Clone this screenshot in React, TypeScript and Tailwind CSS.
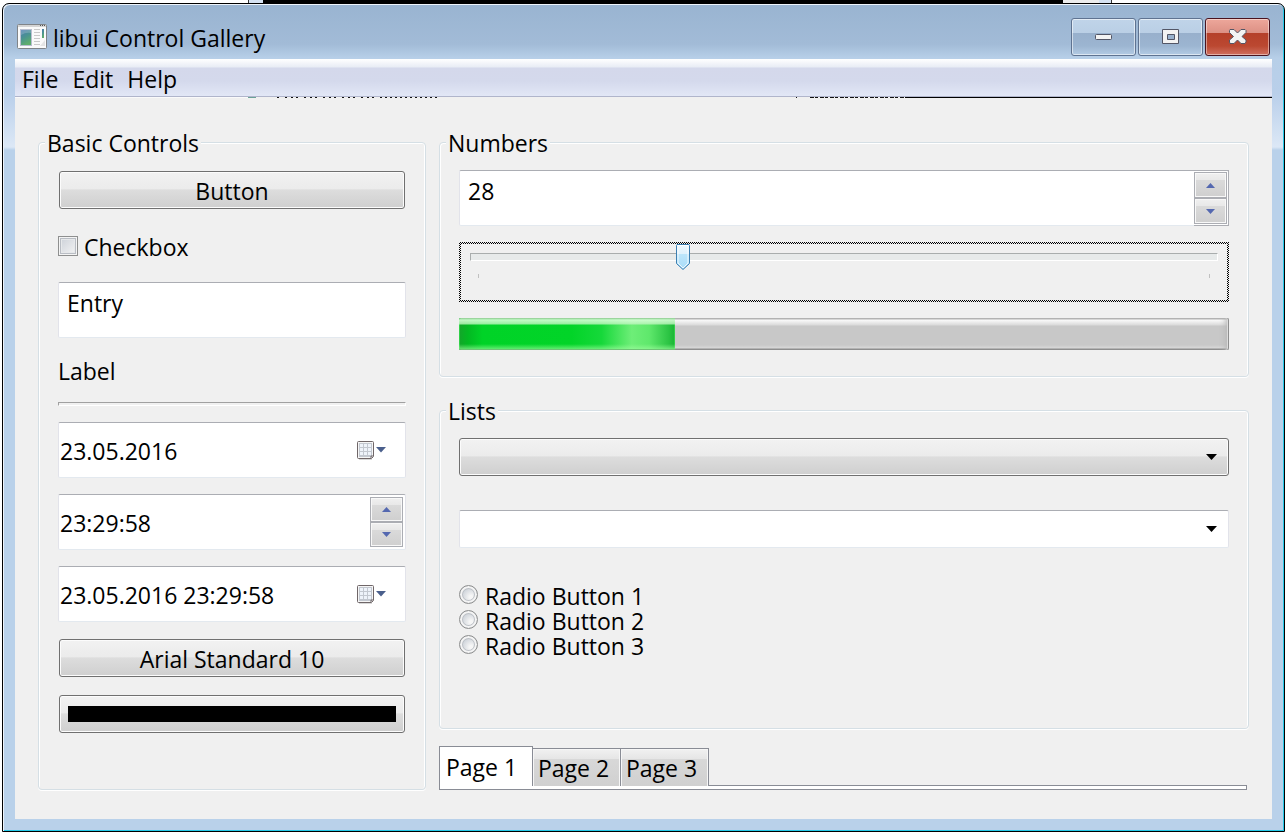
import React, { useState } from 'react';

const buttonFace =
  'border border-[#707070] rounded-[3px] shadow-[inset_0_0_0_1px_#fcfcfc] bg-[linear-gradient(#f2f2f2_0%,#ebebeb_48%,#dddddd_49%,#cfcfcf_100%)]';
const entryFace =
  'border border-t-[#abadb3] border-x-[#e2e3ea] border-b-[#e3e9ef] rounded-[2px] bg-white';

const Group: React.FC<{ title: string; className?: string; children: React.ReactNode }> = ({ title, className, children }) => (
  <fieldset
    className={`min-w-0 border border-[#d5dfe5] rounded-[4px] px-[19px] shadow-[inset_1px_1px_0_#fff,inset_-1px_0_0_#fff,0_1px_0_#fff] ${className ?? ''}`}
  >
    <legend className="-ml-[13px] bg-[#f0f0f0] px-[2px] pt-[3px] pb-px leading-6">{title}</legend>
    <div className="pt-[14px]">{children}</div>
  </fieldset>
);

const AppIcon = () => (
  <svg width="30" height="26" viewBox="0 0 30 26" className="shrink-0" aria-hidden="true">
    <defs>
      <linearGradient id="pane" x1="0" y1="0" x2="0.4" y2="1">
        <stop offset="0" stopColor="#4a78b4" />
        <stop offset="0.55" stopColor="#4b948f" />
        <stop offset="1" stopColor="#5fae6c" />
      </linearGradient>
    </defs>
    <rect x="0.5" y="0.5" width="29" height="24" rx="1" fill="#fafafa" stroke="#808488" />
    <rect x="1" y="1" width="28" height="2" fill="#d4d4d4" />
    <path d="M23 1.5h1M25 1.5h1M27 1.5h1" stroke="#555" />
    <rect x="3.5" y="5.5" width="11" height="16" fill="url(#pane)" stroke="#b9bfd0" />
    <path d="M4 11q5 -3 10 -2V6H4z" fill="#fff" opacity="0.2" />
    <path d="M17 5.5h6M17 8.5h6M17 11.5h6M17 14.5h6M17 17.5h6M17 20.5h6" stroke="#c9c9c9" />
    <rect x="25" y="5" width="2" height="9" fill="url(#pane)" />
    <path d="M28 16v6h-5z" fill="#e4e4e4" />
  </svg>
);

const captionButton =
  'flex h-[38px] w-[65px] items-center justify-center rounded-[3px] border border-[#5f7391] shadow-[inset_0_0_0_1px_rgba(255,255,255,0.55)] bg-[linear-gradient(#c0d4e9_0%,#bacfe5_39%,#98b0cc_40%,#9cb5d1_75%,#b3cbe4_100%)]';

const TitleBar = () => (
  <header className="flex h-[55px] items-center px-[14px] pt-[10px]">
    <AppIcon />
    <h1 className="min-w-0 flex-1 truncate pl-[6px] pt-[2px]">libui Control Gallery</h1>
    <div className="flex gap-[2px]">
      <button type="button" aria-label="Minimize" className={captionButton}>
        <svg width="18" height="8" viewBox="0 0 18 8">
          <rect x="0.5" y="1.5" width="16" height="5" rx="1" fill="#f3f3f3" stroke="#535666" />
        </svg>
      </button>
      <button type="button" aria-label="Maximize" className={captionButton}>
        <svg width="18" height="16" viewBox="0 0 18 16">
          <path d="M0.5 0.5h16v14h-16zM5.5 5.5v5h7v-5z" fill="#f3f3f3" fillRule="evenodd" stroke="#535666" strokeLinejoin="round" />
        </svg>
      </button>
      <button
        type="button"
        aria-label="Close"
        className="flex h-[38px] w-[65px] items-center justify-center rounded-[3px] border border-[#4a1420] bg-[linear-gradient(#eda79b_0%,#dc9084_39%,#b5402a_40%,#bb4831_75%,#d07060_100%)] shadow-[inset_0_0_0_1px_rgba(255,255,255,0.45)]"
      >
        <svg width="18" height="16" viewBox="0 0 18 16">
          <path
            d="M1 0.5h4L8.500 4 12 0.500h4l1 1v2L13 7.500l4 3.500v2l-1 1.500h-4L8.500 11 5 14.500h-4l-0.500 -1.500v-2l4 -3.500L0.500 3.500v-2z"
            fill="#f3f3f3"
            stroke="#535666"
            strokeLinejoin="round"
          />
        </svg>
      </button>
    </div>
  </header>
);

const MenuBar = () => (
  <nav className="flex h-[38px] gap-[14px] border-b border-[#b0b5cb] bg-[linear-gradient(#ffffff_0px,#e8ecf5_8px,#d4d8eb_9px,#d4d9ec_22px,#e2e7f6_37px)] pl-[7px] pt-[2px]">
    {['File', 'Edit', 'Help'].map((item) => (
      <button key={item} type="button" className="leading-9">
        {item}
      </button>
    ))}
  </nav>
);

// Leftovers of the windows behind that show through under the menu
const BackdropRow = () => (
  <div className="flex h-px" aria-hidden="true">
    <svg width="781" height="1" className="shrink-0">
      <rect width="240" height="1" fill="#fafafa" />
      <rect x="233" width="8" height="1" fill="#6aa197" />
      <path d="M262 0.5h108" stroke="#111" strokeDasharray="2 6 2 4 2 3" />
      <path d="M370 0.5h52" stroke="#111" strokeDasharray="2 3" />
    </svg>
    <svg width="109" height="1" className="shrink-0">
      <path d="M0 0.500h1M14 0.500h95" stroke="#111" strokeDasharray="4 1 3 2" />
    </svg>
    <div className="flex-1 bg-black" />
  </div>
);

const Spinner: React.FC<{ label: string; onStep?: (by: number) => void }> = ({ label, onStep }) => {
  const face =
    'flex flex-1 items-center justify-center border border-[#abadb3] bg-[linear-gradient(#f0f0f0_0%,#e8e8e8_30%,#dadada_31%,#cfcfcf_100%)] shadow-[inset_0_0_0_1px_#f8f8f8]';
  return (
    <div className="flex w-[33px] shrink-0 flex-col">
      <button type="button" aria-label={`${label} up`} onClick={() => onStep?.(1)} className={face}>
        <svg width="9" height="5" viewBox="0 0 9 5">
          <path d="M0 5L4.500 0L9 5z" fill="#5468b0" />
        </svg>
      </button>
      <button type="button" aria-label={`${label} down`} onClick={() => onStep?.(-1)} className={face}>
        <svg width="9" height="5" viewBox="0 0 9 5">
          <path d="M0 0L4.500 5L9 0z" fill="#5468b0" />
        </svg>
      </button>
    </div>
  );
};

const DateField: React.FC<{ label: string; value: string }> = ({ label, value }) => (
  <div className={`flex h-14 items-center ${entryFace}`}>
    <input type="text" aria-label={label} defaultValue={value} className="h-full min-w-0 flex-1 bg-transparent pl-px pt-px outline-none" />
    <button type="button" aria-label={`${label} calendar`} className="mr-[19px] flex shrink-0 items-center gap-[2px]">
      <svg width="17" height="19" viewBox="0 0 17 19">
        <path d="M2 18.500h13" stroke="#d8d8d8" />
        <path d="M0.500 1.500a1 1 0 0 1 1 -1h14a1 1 0 0 1 1 1v14l-2 2h-13a1 1 0 0 1 -1 -1z" fill="#f6f6f6" stroke="#6f6668" />
        <rect x="2" y="2" width="13" height="14" fill="#c3c8d0" />
        <path
          d="M3 3h3v3h-3zM7 3h3v3h-3zM11 3h3v3h-3zM3 7h3v3h-3zM7 7h3v3h-3zM11 7h3v3h-3zM3 11h3v3h-3zM7 11h3v3h-3zM11 11h3v3h-3z"
          fill="#eef3fa"
        />
        <path d="M14 17v-2h2" fill="none" stroke="#6f6668" />
      </svg>
      <svg width="10" height="6" viewBox="0 0 10 6">
        <path d="M0 0h10L5 5.500z" fill="#4a5f8c" />
      </svg>
    </button>
  </div>
);

const ComboArrow = () => (
  <svg width="11" height="6" viewBox="0 0 11 6" aria-hidden="true">
    <path d="M0 0h11L5.500 6z" fill="#000" />
  </svg>
);

const BasicControls = () => (
  <Group title="Basic Controls" className="w-[388px] shrink-0">
    <div className="flex flex-col gap-4">
      <div className="flex h-10 p-px">
        <button type="button" className={`flex-1 pt-px ${buttonFace}`}>Button</button>
      </div>
      <label className="flex h-10 items-center gap-[6px]">
        <input
          type="checkbox"
          className="size-5 shrink-0 appearance-none border border-[#8e8f8f] bg-[linear-gradient(135deg,#c9ced6,#f6f6f6)] shadow-[inset_0_0_0_1px_#f4f4f4,inset_0_0_0_2px_#b9bdc4,inset_0_0_0_3px_#e6e8ea] checked:bg-[#4a5f97]"
        />
        <span className="pt-px">Checkbox</span>
      </label>
      <input type="text" aria-label="Entry" defaultValue="Entry" className={`h-14 w-full pb-[14px] pl-2 outline-none ${entryFace}`} />
      <p className="h-8 pt-px leading-8">Label</p>
      <hr className="h-1 border border-[#a0a0a0] border-r-white border-b-white" />
      <DateField label="Date" value="23.05.2016" />
      <div className={`flex h-14 py-[2px] pr-[2px] ${entryFace}`}>
        <input type="text" aria-label="Time" defaultValue="23:29:58" className="min-w-0 flex-1 bg-transparent pl-px pt-px outline-none" />
        <Spinner label="Time" />
      </div>
      <DateField label="Date and time" value="23.05.2016 23:29:58" />
      <div className="flex h-10 p-px">
        <button type="button" className={`flex-1 pt-px ${buttonFace}`}>Arial Standard 10</button>
      </div>
      <div className="flex h-10 p-px">
        <button type="button" aria-label="Color" className={`flex flex-1 items-center px-2 ${buttonFace}`}>
          <span className="h-4 flex-1 bg-black" />
        </button>
      </div>
    </div>
  </Group>
);

const Numbers = () => {
  const [value, setValue] = useState(28);
  const change = (next: number) => setValue(Math.min(100, Math.max(0, next || 0)));

  return (
    <Group title="Numbers" className="pb-[26px]">
      <div className="flex flex-col gap-4">
        <div className={`flex h-14 ${entryFace}`}>
          <input
            type="text"
            inputMode="numeric"
            aria-label="Number"
            value={value}
            onChange={(e) => change(Number(e.target.value))}
            className="min-w-0 flex-1 bg-transparent pb-[14px] pl-2 outline-none"
          />
          <div className="-my-px -mr-px flex border border-l-0 border-[#abadb3] py-px pr-px">
            <Spinner label="Number" onStep={(by) => change(value + by)} />
          </div>
        </div>

        {/* focus ring is a one pixel checkerboard */}
        <div className="relative h-[60px] bg-[repeating-conic-gradient(#000_0_25%,#f0f0f0_0_50%)] bg-[length:2px_2px] p-[2px]">
          <div className="h-full bg-[#f0f0f0] px-[9px] pt-[9px]">
            <div className="h-2 border border-t-[#a9adad] border-l-[#a9adad] border-r-white border-b-white bg-[#e7eaea]" />
            <div className="flex justify-between px-2 pt-[13px]">
              <span className="h-1 w-px bg-[#c0c0c0]" />
              <span className="h-1 w-px bg-[#c0c0c0]" />
            </div>
          </div>
          <div className="pointer-events-none absolute inset-x-[19px] top-[2px]">
            <svg width="15" height="27" viewBox="0 0 15 27" className="absolute -translate-x-1/2" style={{ left: `${value}%` }} aria-hidden="true">
              <defs>
                <linearGradient id="thumb" x1="0" y1="0" x2="0" y2="1">
                  <stop offset="0" stopColor="#eef8fe" />
                  <stop offset="0.36" stopColor="#e0f2fc" />
                  <stop offset="0.37" stopColor="#bde6fb" />
                  <stop offset="1" stopColor="#a9dcf8" />
                </linearGradient>
              </defs>
              <path d="M1.500 0.500h12l0.500 1v18l-6.500 6l-6.500 -6v-18z" fill="url(#thumb)" stroke="#3c7fb1" />
              <path d="M2.500 1.500h10v17.500l-5 5l-5 -5z" fill="none" stroke="#fff" opacity="0.8" />
            </svg>
          </div>
          <input
            type="range"
            aria-label="Slider"
            min={0}
            max={100}
            value={value}
            onChange={(e) => change(Number(e.target.value))}
            className="absolute inset-0 h-full w-full opacity-0"
          />
        </div>

        <div
          role="progressbar"
          aria-label="Progress"
          aria-valuenow={value}
          aria-valuemin={0}
          aria-valuemax={100}
          className="h-8 overflow-hidden rounded-[2px] bg-[linear-gradient(#b2b2b2_0px,#b2b2b2_1px,#fafafa_2px,#dadada_7px,#c8c8c8_8px,#c8c8c8_27px,#d8d8d8_30px,#8e8e8e_31px,#8e8e8e_32px)] shadow-[inset_-1px_0_0_#8e8e8e,inset_-2px_0_0_#dcdcdc,inset_-9px_0_6px_-6px_#b4b4b4]"
        >
          <div
            className="h-full bg-[linear-gradient(90deg,#14a52a_0%,#03b822_4%,#00d327_11%,#02d428_52%,#16d83a_66%,#6eee78_80%,#5fe86c_88%,#2cc444_97%,#19b534_100%)] shadow-[inset_0_0_0_1px_#30cf48]"
            style={{ width: `${value}%` }}
          >
            <div className="h-full bg-[linear-gradient(rgba(150,200,150,0.9)_0px,rgba(215,255,215,0.9)_2px,rgba(190,245,190,0.8)_6px,rgba(255,255,255,0)_7px,rgba(255,255,255,0)_26px,rgba(160,255,160,0.6)_31px,#6a9a6c_32px)]" />
          </div>
        </div>
      </div>
    </Group>
  );
};

const Lists = () => (
  <Group title="Lists" className="flex-1">
    <div className="flex flex-col gap-[34px]">
      <div className="relative">
        <select aria-label="Combobox" className={`block h-[38px] w-full appearance-none px-2 outline-none ${buttonFace}`}>
          <option value=""></option>
          <option>Item 1</option>
          <option>Item 2</option>
        </select>
        <span className="pointer-events-none absolute inset-y-0 right-3 flex items-center">
          <ComboArrow />
        </span>
      </div>
      <div className={`flex h-[38px] ${entryFace}`}>
        <input type="text" aria-label="Editable combobox" className="min-w-0 flex-1 bg-transparent px-2 outline-none" />
        <button type="button" aria-label="Show items" className="px-[11px]">
          <ComboArrow />
        </button>
      </div>
      <div className="flex flex-col">
        {['Radio Button 1', 'Radio Button 2', 'Radio Button 3'].map((item) => (
          <label key={item} className="flex h-[25px] items-center gap-[7px]">
            <input
              type="radio"
              name="radio"
              className="size-[19px] shrink-0 appearance-none rounded-full border border-[#8e8f8f] bg-[radial-gradient(circle_at_65%_65%,#f6f6f6_10%,#c6ccd4_70%)] shadow-[inset_0_0_0_2px_#f4f4f4,inset_0_0_0_3px_#bcc0c6] checked:bg-[#4a5f97]"
            />
            <span className="pt-[3px] leading-[22px]">{item}</span>
          </label>
        ))}
      </div>
    </div>
  </Group>
);

const Tabs = () => {
  const [active, setActive] = useState(0);
  return (
    <div className="mr-[2px] pt-[17px]">
      <div role="tablist" className="flex h-[40px] items-end">
        {['Page 1', 'Page 2', 'Page 3'].map((tab, i) => (
          <button
            key={tab}
            type="button"
            role="tab"
            aria-selected={active === i}
            onClick={() => setActive(i)}
            className={
              active === i
                ? 'relative z-10 h-[40px] w-[94px] border border-b-0 border-[#898c95] bg-white pl-[6px] text-left'
                : 'h-[38px] w-[88px] border border-b-0 border-l-0 border-[#898c95] bg-[linear-gradient(#f1f1f1_0%,#e6e6e6_26%,#d8d8d8_27%,#d0d0d0_100%)] pl-[5px] text-left shadow-[inset_1px_1px_0_#f6f6f6,inset_-1px_0_0_#f6f6f6]'
            }
          >
            {tab}
          </button>
        ))}
      </div>
      <div role="tabpanel" className="-mt-px h-[5px] border border-[#898c95] bg-white" />
    </div>
  );
};

const App: React.FC = () => (
  <div className="flex min-h-screen flex-col bg-white font-['Open_Sans','Noto_Sans',sans-serif] text-[23px] leading-8 text-black">
    <div className="flex h-[3px]" aria-hidden="true">
      <div className="w-[249px] border-r border-[#333]" />
      <div className="w-[14px] bg-[#d5e2f2]" />
      <div className="flex-1 bg-black" />
      <div className="w-[36px] bg-[#ececec]" />
      <div className="w-[13px] border-r border-[#333] bg-[#d5e2f2]" />
      <div className="w-[176px]" />
    </div>

    <div className="mb-1 ml-[2px] mr-[3px] flex flex-1 flex-col rounded-t-[7px] border border-black bg-[linear-gradient(#99b4d1_0px,#a2bbd7_40px,#b7cfe8_54px,#b9cfea_90px,#dce8f6_143px,#b9d1ea_146px)] shadow-[inset_1px_1px_0_#eef4fb,inset_-1px_-1px_0_#25c9e8]">
      <TitleBar />
      <main className="mb-3 ml-3 mr-3 flex flex-1 flex-col bg-[#f0f0f0]">
        <MenuBar />
        <BackdropRow />
        <div className="flex flex-1 gap-[13px] px-[23px] pb-[29px] pt-[30px]">
          <BasicControls />
          <div className="flex min-w-0 flex-1 flex-col">
            <Numbers />
            <div className="flex flex-1 flex-col pt-[19px]">
              <Lists />
            </div>
            <Tabs />
          </div>
        </div>
      </main>
    </div>
  </div>
);

export default App;
